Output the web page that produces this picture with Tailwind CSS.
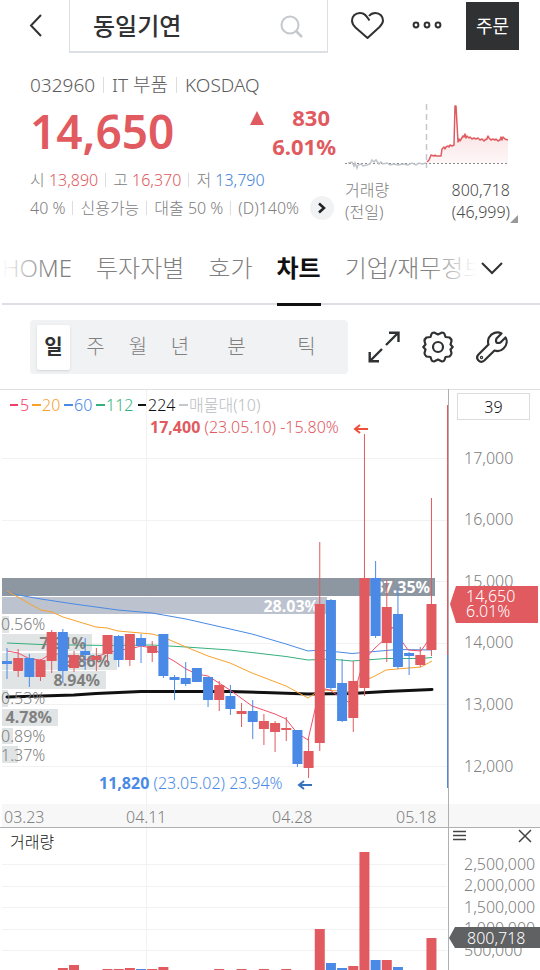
<!DOCTYPE html>
<html lang="ko">
<head>
    <meta charset="UTF-8">
    <meta name="viewport" content="width=device-width, initial-scale=1.0">
    <title>동일기연 - 차트</title>
    <script src="https://cdn.jsdelivr.net/npm/@tailwindcss/browser@4"></script>
</head>
<body class="bg-white font-['Noto_Sans','Noto_Sans_CJK_KR',sans-serif] text-[#808080] font-light">

    <!-- Top bar -->
    <header class="flex items-start h-[53px]">
        <button type="button" aria-label="뒤로" class="shrink-0 w-[69px] h-[50px] pl-[29px] text-left">
            <svg class="w-4 h-6" viewBox="0 0 16 24" fill="none" stroke="#2f3133" stroke-width="2"><path d="M12 2 2 12.500 12 23"/></svg>
        </button>
        <div class="flex-1 min-w-0 flex items-center h-[53px] px-[23px] border-x border-b-2 border-[#dcdfe3]">
            <input type="text" aria-label="종목 검색" value="동일기연" class="flex-1 min-w-0 text-2xl font-medium text-[#2f3133] outline-none">
            <button type="button" aria-label="검색">
                <svg class="w-6 h-6" viewBox="0 0 24 24" fill="none" stroke="#c5c9cd" stroke-width="2"><circle cx="10" cy="11" r="8.500"/><path d="M16 17l6 6" stroke-width="2.500"/></svg>
            </button>
        </div>
        <button type="button" aria-label="관심종목" class="shrink-0 ml-[22px] mt-[11px]">
            <svg class="w-[34px] h-7" viewBox="0 0 34 28" fill="none" stroke="#2f3133" stroke-width="2" stroke-linejoin="round"><path d="M19.500 9.500C17 6 15.500 2 10 2 5 2 2 5.500 2 9.500c0 3 1.500 5 3.500 7L17.500 27 29.500 16c2-2 3.500-4 3.500-6.500C33 5.500 30 2 25.500 2c-3 0-5 1-6.500 3"/></svg>
        </button>
        <button type="button" aria-label="더보기" class="shrink-0 ml-7 mt-[21px]">
            <svg class="w-[30px] h-2" viewBox="0 0 30 8" fill="none" stroke="#2f3133" stroke-width="2"><circle cx="4" cy="4" r="2.400"/><circle cx="15" cy="4" r="2.400"/><circle cx="26" cy="4" r="2.400"/></svg>
        </button>
        <button type="button" class="shrink-0 ml-6 mr-[21px] mt-0.5 w-[53px] h-12 bg-[#2f3133] text-white font-normal text-lg">주문</button>
    </header>

    <!-- Stock summary -->
    <section class="flex justify-between pl-[30px] pr-[30px] pt-5">
        <div class="flex-1">
            <div class="flex items-center gap-2 h-6 text-[19px] text-[#5c5c5c] leading-6">
                <span>032960</span><i class="w-px h-4 bg-[#ddd]"></i>
                <span>IT 부품</span><i class="w-px h-4 bg-[#ddd]"></i>
                <span>KOSDAQ</span>
            </div>
            <div class="flex justify-between h-[69px] pt-1.5 pr-[9px] text-[#e05a5f] font-bold">
                <strong class="text-[46px] leading-[56px] font-semibold">14,650</strong>
                <div class="flex gap-1.5">
                    <svg class="w-[14px] h-[14px] mt-2" viewBox="0 0 14 14"><path d="M7 0l7 14H0z" fill="#e05a5f"/></svg>
                    <div class="w-[66px] text-[22px] leading-[29px] text-right">
                        <p class="pr-1.5">830</p>
                        <p>6.01%</p>
                    </div>
                </div>
            </div>
            <div class="flex items-center gap-[7px] h-7 text-base">
                <span>시 <span class="text-[#e05a5f]">13,890</span></span><i class="w-px h-3.5 bg-[#ddd]"></i>
                <span>고 <span class="text-[#e05a5f]">16,370</span></span><i class="w-px h-3.5 bg-[#ddd]"></i>
                <span>저 <span class="text-[#3f7fdb]">13,790</span></span>
            </div>
            <div class="flex items-center gap-[7px] h-7 text-base whitespace-nowrap">
                <span>40 %</span><i class="w-px h-3.5 bg-[#ddd]"></i>
                <span>신용가능</span><i class="w-px h-3.5 bg-[#ddd]"></i>
                <span>대출 50 %</span><i class="w-px h-3.5 bg-[#ddd]"></i>
                <span>(D)140%</span>
                <button type="button" aria-label="상세" class="w-6 h-6 ml-1 rounded-full bg-[#f1f2f4] flex items-center justify-center">
                    <svg class="w-2.5 h-3" viewBox="0 0 10 12" fill="none" stroke="#222" stroke-width="2.500"><path d="M2 1.500 7 6 2 10.500"/></svg>
                </button>
            </div>
        </div>
        <div class="w-[165px] shrink-0 pt-7">
            <svg class="w-full h-[76px]" viewBox="345 101 165 76" fill="none">
                <defs>
                    <linearGradient id="fade" x1="0" y1="0" x2="0" y2="1">
                        <stop offset="0" stop-color="#e05a5f" stop-opacity=".16"/>
                        <stop offset="1" stop-color="#e05a5f" stop-opacity=".05"/>
                    </linearGradient>
                </defs>
                <path d="M426.500 104v64" stroke="#c4c7ca" stroke-width="1.500" stroke-dasharray="6 4"/>
                <path d="M427 163V162l4-7 3 1h7l1-7 3-2 4-2 5 1 1-5 3 1 6-8 6 4 10 2 7-4 5 3h16v24z" fill="url(#fade)"/>
                <path d="M345 163.500h164" stroke="#888" stroke-dasharray="2 2"/>
                <path d="M348 163l4-1 2 4 1-3 2 5 1-3 3-1 2 2 4-1 3-1 2-4 2 2 2-2 3 4 2-2 2 2 4-1 3 2 4-1 4 1 5-1 5 1 4-2 4 2 3-2 3 1 4-1" stroke="#bfc4c9" stroke-width="1.500"/>
                <path d="M427 162l2-2 2-5 3 1 1-1 1 1 5 0 1-7 2-2 1 2 1-2 2-1 1 1 1-2 2 1 2-1 1-39h1l2 36 1-3 1 2 3-5 1 1 1-3 1 4 1-2 2 2 1-1 2 2 2-1 2 1 2-1 2 2 2-1 2 2 1-1 2-1 1-3 1 2 2 2 2-1 2 1 1-1 2 2 2-1 1-3 1 3 1-3 2 2 3 1" stroke="#e05a5f" stroke-width="1.500" stroke-linejoin="round"/>
            </svg>
            <div class="relative flex justify-between text-base leading-[22px] pt-0.5">
                <p>거래량<br>(전일)</p>
                <p class="text-right text-[#4a4a4a]">800,718<br>(46,999)</p>
                <svg class="absolute -right-2 bottom-0 w-2 h-2" viewBox="0 0 8 8"><path d="M8 0v8H0z" fill="#999"/></svg>
            </div>
        </div>
    </section>

    <!-- Tabs -->
    <nav class="relative flex h-[78px] ml-0.5 border-b-2 border-[#dcdfe3] text-2xl leading-9 whitespace-nowrap pt-[23px] mt-1">
        <div class="flex gap-6 overflow-x-clip flex-1 min-w-0">
            <a href="#">HOME</a>
            <a href="#">투자자별</a>
            <a href="#">호가</a>
            <a href="#" class="h-14 border-b-3 border-[#111] text-[#111] font-bold">차트</a>
            <a href="#">기업/재무정보</a>
        </div>
        <span class="absolute left-0 top-0 w-12 h-[70px] bg-linear-to-r from-white to-transparent"></span>
        <span class="absolute right-16 top-0 w-12 h-[70px] bg-linear-to-l from-white to-transparent"></span>
        <button type="button" aria-label="메뉴 펼치기" class="shrink-0 w-16 h-9 pl-1 flex items-center">
            <svg class="w-6 h-4" viewBox="0 0 24 16" fill="none" stroke="#2f3133" stroke-width="2"><path d="M2 3l10 10L22 3"/></svg>
        </button>
    </nav>

    <!-- Period + tools -->
    <div class="flex items-center justify-between h-[84px] pl-[30px] pr-8">
        <div class="flex items-center h-[54px] px-[7px] rounded-sm bg-[#f1f2f4] text-xl">
            <button type="button" class="w-[33px] h-[45px] bg-white shadow-sm rounded-xs text-[#2f3133] font-bold">일</button>
            <button type="button" class="w-[47px] pl-1">주</button>
            <button type="button" class="w-[42px]">월</button>
            <button type="button" class="w-[42px]">년</button>
            <button type="button" class="w-[71px]">분</button>
            <button type="button" class="w-[69px]">틱</button>
        </div>
        <div class="flex gap-[22px]">
            <button type="button" aria-label="전체화면">
                <svg class="w-8 h-8" viewBox="0 0 32 32" fill="none" stroke="#2f3133" stroke-width="2.400"><path d="M18 14 30 2M21 1.700h9.500V11M14 18 2 30M1.700 21v9.300H11"/></svg>
            </button>
            <button type="button" aria-label="설정">
                <svg class="w-8 h-8" viewBox="0 0 32 32" fill="none" stroke="#2f3133" stroke-width="2.200" stroke-linejoin="round"><circle cx="16" cy="16" r="5"/><path d="M12 1.500 16 3.500 20 1.500Q22 1.500 22.500 3L23.500 6 27.500 6.500Q29.500 8 29.500 10L28.500 13.500 30.700 16 28.500 18.500 29.500 22Q29.500 24 27.500 25.500L23.500 26 22.500 29Q22 30.500 20 30.500L16 28.500 12 30.500Q10 30.500 9.500 29L8.500 26 4.500 25.500Q2.500 24 2.500 22L3.500 18.500 1.300 16 3.500 13.500 2.500 10Q2.500 8 4.500 6.500L8.500 6 9.500 3Q10 1.500 12 1.500Z"/></svg>
            </button>
            <button type="button" aria-label="도구">
                <svg class="w-8 h-8" viewBox="0 0 32 32" fill="none" stroke="#2f3133" stroke-width="2.200" stroke-linejoin="round" stroke-linecap="round"><path d="M25.500 2.500C21 0 15.500 2 13 6.500c-1.200 2.500-1.200 5-.5 7L2.500 23.500c-1.800 2-1.500 4.500 0 6s4 1.500 5.800 0L18.500 19.500c3 1 6.500.5 9-2C31 14 31.500 9.500 29.500 6.500L24.500 11.500Q22 12.500 20.500 11.500 19.500 10 20.500 7.500L25.500 2.500Z"/><circle cx="5.500" cy="26.500" r=".6"/></svg>
            </button>
        </div>
    </div>

    <!-- Price and volume chart -->
    <main>
        <svg class="block w-full text-base" viewBox="0 389 540 581" fill="#808080">
            <rect x="2" y="804" width="538" height="23" fill="#f7f7f7"/>
            <path d="M2 458.500h445M2 520.500h445M2 581.500h445M2 643.500h445M2 704.500h445M2 766.500h445M2 864.500h445M2 886.500h445M2 907.500h445M2 929.500h445M2 950.500h445M146.500 390v580" stroke="#f2f2f2"/>
            <path d="M0 389.500h540" stroke="#e0e0e0"/>
            <path d="M0 827.500h540" stroke="#b0b0b0"/>

            <!-- Volume profile -->
            <path d="M2 578h433v18H2z" fill="#8d97a1"/>
            <path d="M2 597h325v17H2z" fill="#bcc3ce"/>
            <path d="M2 616h7v17H2zM2 634h90v17H2zM2 653h115v17H2zM2 671h104v18H2zM2 690h6v17H2zM2 709h56v17H2zM2 728h11v16H2zM2 746h16v17H2z" fill="#e0e4e4"/>

            <!-- Moving averages -->
            <g fill="none">
                <path d="M7 697 41 696 74 695 96 693.500 141 691.500 163 691.500 230 691.500 264 692.500 308 694 352 693.500 386 691.500 432 689.500" stroke="#111" stroke-width="3" stroke-linecap="round"/>
                <path d="M7 643 41 644.500 107 645.500 152 645 186 647 230 650 286 656.500 308 660 330 659 352 661 386 658.500 421 658.500 432 657.500" stroke="#35b07c"/>
                <path d="M7 592 18 595 41 599 74 604 118 610 152 613 186 619 230 629 252 634 286 644 308 651 320 650 352 653.500 386 650.500 397 649.500 432 650" stroke="#4a8ae6"/>
                <path d="M7 591 18 597 30 604 41 610 52 612 63 617 96 627 107 628 118 631 152 634 163 637 186 647 208 656 230 663 252 673 286 686 297 692 308 698 320 690 341 691 352 692 364 681 375 676 386 670 397 669 421 667 432 661" stroke="#f9a12d"/>
                <path d="M7 651 18 653 30 659 41 660 52 653 63 655 74 657 85 660 96 657 107 653 118 650 130 649 141 646 152 648 163 655 174 661 186 669 197 674 208 676 219 683 230 690 252 706 275 714 286 719 297 733 308 740 320 688 330 690 341 698 352 704 358 680 364 660 375 648 386 638 392 627 408 650 421 651 432 635" stroke="#f0506e"/>
            </g>

            <g>
                <text x="1" y="630">0.56%</text>
                <text x="1" y="704">0.53%</text>
                <text x="1" y="742">0.89%</text>
                <text x="1" y="761">1.37%</text>
            </g>
            <g class="font-bold" text-anchor="end">
                <text x="86" y="649">7.91%</text>
                <text x="110" y="667">9.86%</text>
                <text x="100" y="686">8.94%</text>
                <text x="52" y="723">4.78%</text>
                <text x="430" y="593" fill="#fff">37.35%</text>
                <text x="319" y="612" fill="#fff">28.03%</text>
            </g>

            <g id="candles"></g>
            <g id="volumes"></g>
            <path d="M447.500 405v250" stroke="#e05a5f"/>
            <path d="M447.500 655v133" stroke="#4a8ae6"/>
            <path d="M448.500 389v581" stroke="#b0b0b0"/>

            <!-- Legend -->
            <g stroke-width="2">
                <path d="M10 405h8" stroke="#f0406a"/><path d="M32 405h9" stroke="#f9a12d"/><path d="M64 405h9" stroke="#4a8ae6"/>
                <path d="M96 405h9" stroke="#35b07c"/><path d="M138 405h8" stroke="#111"/><path d="M179 405h9" stroke="#c5c9cd"/>
            </g>
            <text x="20" y="411" fill="#f0406a">5</text>
            <text x="42" y="411" fill="#f9a12d">20</text>
            <text x="74" y="411" fill="#4a8ae6">60</text>
            <text x="106" y="411" fill="#35b07c">112</text>
            <text x="148" y="411" fill="#111">224</text>
            <text x="189" y="411" fill="#b9bdc2">매물대(10)</text>

            <text x="150" y="433" fill="#e05a5f"><tspan class="font-bold">17,400</tspan> (23.05.10) -15.80%</text>
            <path d="M368 429h-13m5-4-5 4 5 4" fill="none" stroke="#ee5138" stroke-width="2"/>
            <text x="99" y="789" fill="#4a8ae6"><tspan class="font-bold">11,820</tspan> (23.05.02) 23.94%</text>
            <path d="M312 785h-13m5-4-5 4 5 4" fill="none" stroke="#3573bd" stroke-width="2"/>

            <!-- Axes -->
            <text x="464" y="464">17,000</text>
            <text x="464" y="525">16,000</text>
            <text x="464" y="587">15,000</text>
            <text x="464" y="648">14,000</text>
            <text x="464" y="710">13,000</text>
            <text x="464" y="772">12,000</text>
            <text x="4" y="823">03.23</text>
            <text x="126" y="823">04.11</text>
            <text x="272" y="823">04.28</text>
            <text x="396" y="823">05.18</text>
            <text x="464" y="870">2,500,000</text>
            <text x="464" y="891">2,000,000</text>
            <text x="464" y="913">1,500,000</text>
            <text x="464" y="934">1,000,000</text>
            <text x="464" y="956">500,000</text>
            <text x="10" y="848" fill="#111">거래량</text>

            <!-- Current price and volume tags -->
            <path d="M450 604l6-18h82v37h-82z" fill="#e05a5f"/>
            <text x="466" y="602" fill="#fff">14,650</text>
            <text x="466" y="617" fill="#fff">6.01%</text>
            <path d="M449 938l6-11h85v21h-85z" fill="#5f6163"/>
            <text x="467" y="944" fill="#fff">800,718</text>

            <foreignObject x="457" y="393" width="73" height="27">
                <input type="text" aria-label="표시 개수" value="39" class="block w-full h-full border border-[#dcdcdc] bg-white text-center text-base text-[#111] outline-none">
            </foreignObject>
            <foreignObject x="451" y="829" width="82" height="14">
                <div class="flex justify-between h-full">
                    <button type="button" aria-label="지표 메뉴" class="w-4 h-[14px]"><svg class="w-4 h-[14px]" viewBox="0 0 16 14" stroke="#444" fill="none"><path d="M2 2.500h13M2 6.500h13M2 10.500h13" stroke-width="1.300"/></svg></button>
                    <button type="button" aria-label="닫기" class="w-4 h-[14px]"><svg class="w-4 h-[14px]" viewBox="0 0 16 14" stroke="#444" fill="none"><path d="M2 1l12 12M14 1 2 13" stroke-width="1.500"/></svg></button>
                </div>
            </foreignObject>
        </svg>
    </main>

    <script>
        const UP = '#e05a5f';
        const DOWN = '#4a8ae6';
        const STEP = 11.17;

        // [high, body top, body bottom, low, up?]
        const candles = [
            [648, 661, 664, 679, 0], [649, 658, 671, 677, 1], [654, 658, 677, 687, 0], [659, 660, 677, 681, 1],
            [630, 632, 661, 673, 1], [629, 632, 671, 683, 0], [651, 655, 668, 672, 1], [638, 651, 655, 670, 0],
            [648, 656, 660, 671, 1], [635, 635, 654, 663, 1], [635, 636, 660, 667, 0], [634, 634, 660, 666, 1],
            [634, 638, 646, 663, 0], [641, 646, 653, 662, 1], [634, 634, 676, 678, 0], [675, 677, 680, 700, 0],
            [662, 678, 684, 686, 0], [668, 668, 682, 682, 0], [677, 677, 700, 707, 0], [681, 685, 700, 711, 1],
            [685, 696, 709, 715, 0], [703, 711, 714, 727, 1], [700, 711, 722, 739, 0], [714, 721, 729, 745, 1],
            [721, 723, 732, 752, 1], [717, 728, 730, 741, 1], [730, 730, 764, 767, 0], [738, 751, 768, 778, 1],
            [542, 604, 743, 751, 1], [599, 600, 688, 690, 0], [659, 683, 721, 722, 0], [661, 681, 718, 732, 1],
            [434, 578, 688, 696, 1], [561, 578, 636, 638, 0], [580, 607, 643, 662, 1], [588, 614, 667, 669, 0],
            [652, 653, 656, 675, 0], [647, 655, 665, 667, 1], [498, 604, 650, 656, 1]
        ];

        // [candle index, bar top, up?]
        const volumes = [
            [5, 968, 1], [6, 965, 1], [9, 969, 1], [10, 969, 1], [11, 968, 1], [12, 969, 0], [13, 969, 1], [14, 967, 1],
            [19, 969, 1], [21, 969, 1], [23, 969, 1], [25, 969, 1], [28, 929, 1], [29, 963, 0], [30, 968, 0],
            [31, 966, 1], [32, 852, 1], [33, 960, 0], [34, 960, 1], [35, 967, 0], [38, 938, 1]
        ];

        const centerX = (i) => 7 + STEP * i;

        document.getElementById('candles').innerHTML = candles.map(([high, top, bottom, low, up], i) => {
            const x = centerX(i);
            const color = up ? UP : DOWN;
            return `<path d="M${x} ${high}V${low}" stroke="${color}"/><rect x="${x - 5}" y="${top}" width="10" height="${bottom - top}" fill="${color}"/>`;
        }).join('');

        document.getElementById('volumes').innerHTML = volumes.map(([i, top, up]) =>
            `<rect x="${centerX(i) - 5}" y="${top}" width="10" height="${970 - top}" fill="${up ? UP : DOWN}"/>`
        ).join('');
    </script>
</body>
</html>
